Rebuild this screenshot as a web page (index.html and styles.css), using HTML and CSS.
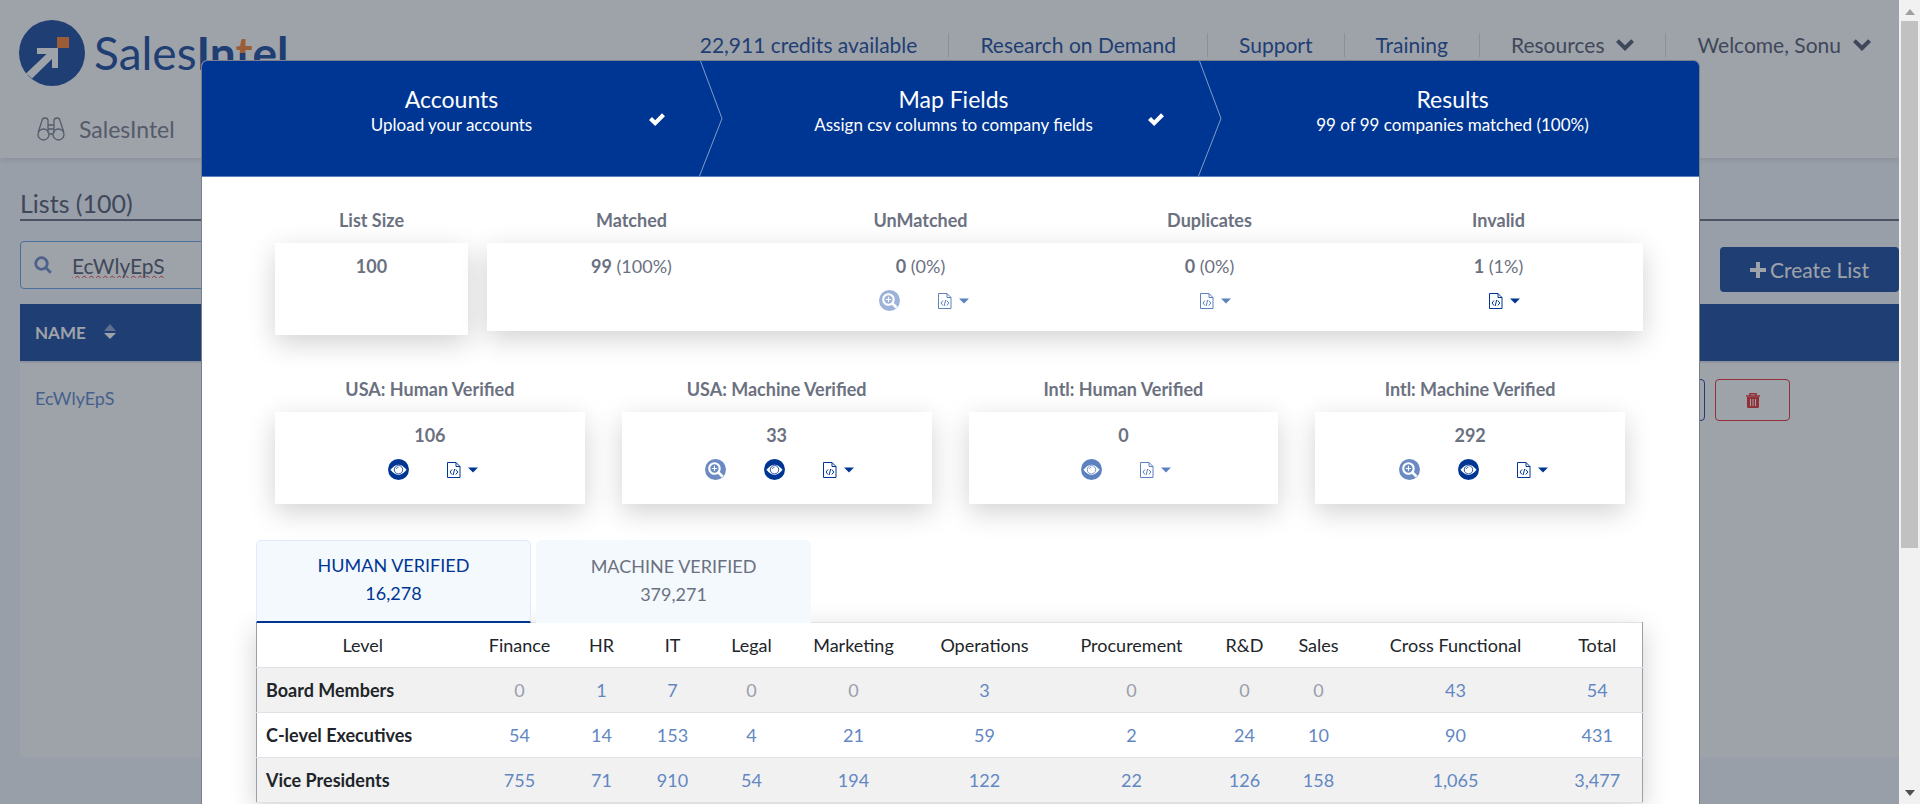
FILE: index.html
```html
<!DOCTYPE html>
<html lang="en">
<head>
<meta charset="utf-8">
<title>SalesIntel - Lists</title>
<link rel="stylesheet" href="styles.css">
</head>
<body>
<svg class="sprite" aria-hidden="true">
  <symbol id="i-zoom" viewBox="0 0 20 20"><circle cx="10" cy="10" r="10" fill="currentColor"/><circle cx="9" cy="9" r="5" fill="none" stroke="#fff" stroke-width="2"/><path d="M9 6.500v5M6.500 9h5" stroke="#fff" stroke-width="1"/><path d="M12.800 12.800l4 4" stroke="#fff" stroke-width="2.600"/></symbol>
  <symbol id="i-eye" viewBox="0 0 20 20"><circle cx="10" cy="10" r="10" fill="currentColor"/><path d="M2.300 10.300Q10 .5 17.700 10.300Q10 20 2.300 10.300z" fill="#fff"/><circle cx="10" cy="10.200" r="4" fill="#fff" stroke="currentColor" stroke-width=".8"/><path d="M7.800 9.600a2.400 2.400 0 0 1 2.200-1.800" fill="none" stroke="currentColor" stroke-width=".6"/></symbol>
  <symbol id="i-code" viewBox="0 0 14 16"><path d="M.5.5h8.500l4 4v11H.5zM9 .5v4h4" fill="none" stroke="currentColor"/><path d="M5 7.500L3 10l2 2.500M8.800 7.500l2 2.500-2 2.500M7.600 7l-1.400 6" fill="none" stroke="currentColor"/></symbol>
  <symbol id="i-caret" viewBox="0 0 10 6"><path d="M0 .5h10l-5 5z" fill="currentColor"/></symbol>
  <symbol id="i-check" viewBox="0 0 16 13"><path d="M0 7l3-3 3.200 3.200L13 .3l3 2.900L6.200 13z" fill="currentColor"/></symbol>
  <symbol id="i-down" viewBox="0 0 18 12"><path d="M0 3l2.800-2.800L9 6.300 15.200.2 18 3l-9 9z" fill="currentColor"/></symbol>
</svg>
<div class="screen">
  <div class="page">
    <header class="top">
      <div class="top-row">
        <a class="logo" href="#">
          <svg class="logo-mark" viewBox="0 0 66 66"><circle cx="33" cy="33" r="33" fill="#003693"/><path d="M18 28h21v20h-6V39L13 58.500 7 53.500 27.500 34H18z" fill="#fff"/><rect x="38" y="17" width="12" height="11" fill="#f8741c"/></svg>
          <span class="wordmark">Sales<b>In<span class="tee">t</span>el</b></span>
        </a>
        <nav class="nav">
          <a href="#">22,911 credits available</a>
          <a href="#">Research on Demand</a>
          <a href="#">Support</a>
          <a href="#">Training</a>
          <button class="dark" type="button">Resources <svg width="18" height="12"><use href="#i-down"/></svg></button>
          <button class="dark" type="button">Welcome, Sonu <svg width="18" height="12"><use href="#i-down"/></svg></button>
        </nav>
      </div>
      <a class="product" href="#">
        <svg width="28" height="24" viewBox="0 0 28 24" fill="none" stroke="currentColor" stroke-width="1.300"><circle cx="6.500" cy="17.500" r="5.500"/><circle cx="21.500" cy="17.500" r="5.500"/><path d="M1.300 15L5 3.500Q5.500 1 8 1t3 2v13M26.700 15L23 3.500Q22.500 1 20 1t-3 2v13M11 8h6M11 12h6M12 17h4"/></svg>
        SalesIntel
      </a>
    </header>
    <main class="lists">
      <h1>Lists (100)</h1>
      <div class="toolbar">
        <label class="search">
          <svg width="18" height="18" viewBox="0 0 18 18" fill="none" stroke="currentColor" stroke-width="2.800"><circle cx="7.500" cy="7.500" r="5.800"/><path d="M11.800 11.800l5 5"/></svg>
          <input type="text" value="EcWlyEpS" aria-label="Search lists">
        </label>
        <button class="create" type="button"><svg width="16" height="16" viewBox="0 0 16 16"><path d="M6 0h4v6h6v4h-6v6H6v-6H0V6h6z" fill="currentColor"/></svg> Create List</button>
      </div>
      <table class="list-table">
        <thead><tr><th>NAME <svg width="12" height="15" viewBox="0 0 12 15"><path d="M0 7l6-7 6 7z" fill="#7f9bc9"/><path d="M0 9h12l-6 6z" fill="#fff"/></svg></th><th></th></tr></thead>
        <tbody><tr><td><a href="#">EcWlyEpS</a></td><td><div class="row-actions"><button class="edit" type="button" aria-label="View"></button><button class="trash" type="button" aria-label="Delete"><svg width="14" height="15" viewBox="0 0 14 15"><path d="M4 2.500V.7h6v1.800M0 3h14" fill="none" stroke="currentColor" stroke-width="1.500"/><path d="M1 4h12v9.500q0 1.500-1.500 1.500h-9Q1 15 1 13.500z" fill="currentColor"/><path d="M4.500 6v7M7 6v7M9.500 6v7" stroke="#fff"/></svg></button></div></td></tr></tbody>
      </table>
    </main>
    <div class="backdrop">
      <section class="modal" role="dialog" aria-label="List results">
        <ol class="steps">
          <li><strong>Accounts</strong><span>Upload your accounts</span><svg class="check"><use href="#i-check"/></svg><svg class="arrow" viewBox="0 0 24 115" preserveAspectRatio="none"><path d="M1.500 0L23 57.500 0.500 115" fill="none" stroke="#809bc9" stroke-width="1"/></svg></li>
          <li><strong>Map Fields</strong><span>Assign csv columns to company fields</span><svg class="check"><use href="#i-check"/></svg><svg class="arrow" viewBox="0 0 24 115" preserveAspectRatio="none"><path d="M1.500 0L23 57.500 0.500 115" fill="none" stroke="#809bc9" stroke-width="1"/></svg></li>
          <li><strong>Results</strong><span>99 of 99 companies matched (100%)</span></li>
        </ol>
        <div class="content">
          <div class="summary">
            <div class="stat size"><h2>List Size</h2><div class="card"><p><b>100</b></p></div></div>
            <div class="matches">
              <div class="heads"><h2>Matched</h2><h2>UnMatched</h2><h2>Duplicates</h2><h2>Invalid</h2></div>
              <div class="card wide">
                <div><p><b>99</b> (100%)</p></div>
                <div><p><b>0</b> (0%)</p><div class="acts off"><button class="faint" type="button" aria-label="Research"><svg class="round"><use href="#i-zoom"/></svg></button><button type="button" aria-label="Export"><svg class="doc"><use href="#i-code"/></svg><svg class="caret"><use href="#i-caret"/></svg></button></div></div>
                <div><p><b>0</b> (0%)</p><div class="acts off"><button type="button" aria-label="Export"><svg class="doc"><use href="#i-code"/></svg><svg class="caret"><use href="#i-caret"/></svg></button></div></div>
                <div><p><b>1</b> (1%)</p><div class="acts"><button type="button" aria-label="Export"><svg class="doc"><use href="#i-code"/></svg><svg class="caret"><use href="#i-caret"/></svg></button></div></div>
              </div>
            </div>
          </div>
          <div class="verified">
            <div class="stat"><h2>USA: Human Verified</h2><div class="card"><p><b>106</b></p><div class="acts"><button type="button" aria-label="View"><svg class="round"><use href="#i-eye"/></svg></button><button type="button" aria-label="Export"><svg class="doc"><use href="#i-code"/></svg><svg class="caret"><use href="#i-caret"/></svg></button></div></div></div>
            <div class="stat"><h2>USA: Machine Verified</h2><div class="card"><p><b>33</b></p><div class="acts"><button class="soft" type="button" aria-label="Research"><svg class="round"><use href="#i-zoom"/></svg></button><button type="button" aria-label="View"><svg class="round"><use href="#i-eye"/></svg></button><button type="button" aria-label="Export"><svg class="doc"><use href="#i-code"/></svg><svg class="caret"><use href="#i-caret"/></svg></button></div></div></div>
            <div class="stat"><h2>Intl: Human Verified</h2><div class="card"><p><b>0</b></p><div class="acts off"><button type="button" aria-label="View"><svg class="round"><use href="#i-eye"/></svg></button><button type="button" aria-label="Export"><svg class="doc"><use href="#i-code"/></svg><svg class="caret"><use href="#i-caret"/></svg></button></div></div></div>
            <div class="stat"><h2>Intl: Machine Verified</h2><div class="card"><p><b>292</b></p><div class="acts"><button class="soft" type="button" aria-label="Research"><svg class="round"><use href="#i-zoom"/></svg></button><button type="button" aria-label="View"><svg class="round"><use href="#i-eye"/></svg></button><button type="button" aria-label="Export"><svg class="doc"><use href="#i-code"/></svg><svg class="caret"><use href="#i-caret"/></svg></button></div></div></div>
          </div>
          <div class="breakdown">
            <div class="tabs" role="tablist">
              <button class="on" type="button" role="tab" aria-selected="true"><span>HUMAN VERIFIED</span><span>16,278</span></button>
              <button type="button" role="tab" aria-selected="false"><span>MACHINE VERIFIED</span><span>379,271</span></button>
            </div>
            <table class="levels">
              <colgroup><col class="w212"><col class="w102"><col class="w62"><col class="w80"><col class="w78"><col class="w126"><col class="w136"><col class="w158"><col class="w68"><col class="w80"><col class="w194"><col class="w90"></colgroup>
              <thead><tr><th>Level</th><th>Finance</th><th>HR</th><th>IT</th><th>Legal</th><th>Marketing</th><th>Operations</th><th>Procurement</th><th>R&amp;D</th><th>Sales</th><th>Cross Functional</th><th>Total</th></tr></thead>
              <tbody>
                <tr><th scope="row">Board Members</th><td class="nil">0</td><td><a href="#">1</a></td><td><a href="#">7</a></td><td class="nil">0</td><td class="nil">0</td><td><a href="#">3</a></td><td class="nil">0</td><td class="nil">0</td><td class="nil">0</td><td><a href="#">43</a></td><td><a href="#">54</a></td></tr>
                <tr><th scope="row">C-level Executives</th><td><a href="#">54</a></td><td><a href="#">14</a></td><td><a href="#">153</a></td><td><a href="#">4</a></td><td><a href="#">21</a></td><td><a href="#">59</a></td><td><a href="#">2</a></td><td><a href="#">24</a></td><td><a href="#">10</a></td><td><a href="#">90</a></td><td><a href="#">431</a></td></tr>
                <tr><th scope="row">Vice Presidents</th><td><a href="#">755</a></td><td><a href="#">71</a></td><td><a href="#">910</a></td><td><a href="#">54</a></td><td><a href="#">194</a></td><td><a href="#">122</a></td><td><a href="#">22</a></td><td><a href="#">126</a></td><td><a href="#">158</a></td><td><a href="#">1,065</a></td><td><a href="#">3,477</a></td></tr>
              </tbody>
            </table>
          </div>
        </div>
      </section>
    </div>
  </div>
  <div class="scrollbar" aria-hidden="true">
    <svg width="10" height="6"><path d="M0 6l5-6 5 6z" fill="#a0a0a0"/></svg>
    <div class="thumb"></div>
    <svg width="10" height="6"><path d="M0 0h10L5 6z" fill="#505050"/></svg>
  </div>
</div>
</body>
</html>
```
FILE: styles.css
```css
* { box-sizing: border-box; }
body { margin: 0; font-family: Lato, "Open Sans", sans-serif; font-size: 18px; color: #212529; }
a { color: inherit; text-decoration: none; }
button { font: inherit; color: inherit; background: none; border: 0; padding: 0; }
h1, h2, p, ol { margin: 0; padding: 0; font-weight: 400; }
svg { display: block; flex: none; }
.sprite { position: absolute; width: 0; height: 0; }

.screen { display: grid; grid-template-columns: minmax(0, 1fr) 21px; height: 100vh; overflow: hidden; }
.page { position: relative; background: #f2f8fd; overflow: hidden; }

.top { height: 158px; background: #fff; box-shadow: 0 2px 6px rgba(0, 0, 0, .12); display: flex; flex-direction: column; justify-content: space-between; }
.top-row { display: flex; justify-content: space-between; align-items: flex-start; padding: 20px 28px 0 19px; }
.logo { display: flex; align-items: center; gap: 9px; height: 66px; }
.logo-mark { width: 66px; height: 66px; }
.wordmark { font-size: 46px; line-height: 66px; color: #003693; }
.tee { background: linear-gradient(#f8741c 50%, #003693 50%); background-clip: text; color: transparent; }
.nav { display: flex; align-items: flex-start; font-size: 21px; line-height: 24px; color: #003693; padding-top: 13px; }
.nav > * { display: flex; align-items: center; gap: 12px; height: 24px; padding: 0 31px; border-right: 1px solid #d3dbe9; }
.nav > :last-child { border-right: 0; padding-right: 0; }
.dark { color: #414a60; }
.product { display: flex; align-items: center; gap: 14px; padding: 0 0 15px 37px; font-size: 23px; line-height: 28px; color: #6b7180; }

.lists { padding: 30px 0 0 20px; }
.lists h1 { font-size: 25px; line-height: 31px; border-bottom: 2px solid #5a6272; color: #414a60; }
.toolbar { display: flex; justify-content: space-between; align-items: flex-end; padding: 20px 0 12px; }
.search { display: flex; align-items: center; gap: 20px; width: 420px; height: 48px; margin-bottom: 3px; padding: 0 13px; border: 1px solid #5a9ae8; border-radius: 4px; background: #fff; color: #5a7fc0; }
.search input { flex: 1; min-width: 0; border: 0; outline: 0; padding: 0; background: none; font: inherit; font-size: 21px; color: #414a60; text-decoration: underline wavy #ee1c24 1px; }
.create { display: flex; align-items: center; justify-content: center; gap: 4px; width: 179px; height: 45px; border-radius: 4px; background: #003693; color: #fff; font-size: 21px; }
.list-table { width: 100%; height: 453px; border-collapse: collapse; background: #fff; }
.list-table th { height: 58px; background: #003693; color: #fff; text-align: left; font-size: 17px; padding: 0 15px; border-bottom: 2px solid #dee2e6; }
.list-table th svg { display: inline-block; margin-left: 14px; }
.list-table td { vertical-align: top; padding: 16px 15px; line-height: 38px; color: #4d7ac4; }
.row-actions { display: flex; justify-content: flex-end; gap: 10px; padding-right: 94px; }
.row-actions button { width: 75px; height: 42px; border: 1px solid #003693; border-radius: 4px; display: grid; place-items: center; }
.row-actions .trash { border-color: #e51a1a; color: #e51a1a; }

.backdrop { position: absolute; inset: 0; padding: 60px 0 0 2px; background: rgba(62, 70, 83, .5); overflow: hidden; }
.modal { max-width: 1499px; margin: 0 auto; background: #fff; border: 1px solid #797f89; border-radius: 6px; overflow: hidden; }
.steps { display: grid; grid-template-columns: repeat(3, 1fr); list-style: none; background: #003693; color: #fff; border-bottom: 1px solid #5c81bb; }
.steps li { position: relative; height: 115px; padding-top: 24px; text-align: center; }
.steps li + li { padding-left: 6px; }
.steps strong { display: block; font-weight: 400; font-size: 23px; line-height: 28px; }
.steps span { display: block; font-size: 17px; line-height: 24px; }
.check { position: absolute; right: 36px; top: 52px; width: 16px; height: 13px; }
.arrow { position: absolute; right: -22px; top: 0; width: 24px; height: 100%; }

.content { padding: 31px 56px 60px 54px; }
.content h2 { font-size: 18px; line-height: 24px; font-weight: 700; text-align: center; color: #6b7180; margin-bottom: 11px; }
.summary { display: grid; grid-template-columns: 193px 1fr; gap: 19px; padding-left: 19px; align-items: start; }
.card { min-height: 92px; padding-top: 10px; background: #fff; box-shadow: 0 8px 26px rgba(0, 0, 0, .18); text-align: center; color: #6b7180; }
.card p { line-height: 26px; }
.heads, .wide { display: grid; grid-template-columns: repeat(4, 1fr); }
.wide { min-height: 88px; }
.acts { display: flex; justify-content: center; gap: 38px; margin-top: 11px; padding-left: 6px; height: 21px; color: #003693; }
.acts button { display: flex; align-items: center; gap: 7px; }
.acts button:only-child { margin-left: 6px; }
.off { color: #5c81bf; }
.acts .soft { color: #6b8ac2; }
.acts .faint { color: #9db2d8; }
.round { width: 21px; height: 21px; }
.doc { width: 14px; height: 16px; }
.caret { width: 10px; height: 6px; }
.verified { display: grid; grid-template-columns: repeat(4, 1fr); gap: 37px; padding: 42px 18px 36px 19px; }

.tabs { display: flex; gap: 5px; }
.tabs button { width: 275px; height: 83px; padding-bottom: 4px; border: 1px solid #f4f9fe; border-bottom: 0; border-radius: 5px 5px 0 0; background: #f4f9fe; color: #6b7180; font-size: 18px; line-height: 28px; }
.tabs span { display: block; }
.tabs .on { color: #003693; border-color: #e2e9fc; border-bottom: 2px solid #003693; }
.levels { width: 100%; table-layout: fixed; border-collapse: collapse; margin-top: -1px; box-shadow: 0 8px 26px rgba(0, 0, 0, .18); background: #fff; border: 1px solid #9a9fa9; border-top-color: #dee2e6; }
.levels th, .levels td { height: 45px; padding: 0; text-align: center; font-weight: 400; border-bottom: 1px solid #dee2e6; }
.levels tbody th { text-align: left; font-weight: 700; padding-left: 9px; }
.levels tbody tr:nth-child(odd) { background: #f1f1f1; }
.levels td { color: #6387c3; }
.levels .nil { color: #9a9fab; }
.w212 { width: 212px; } .w102 { width: 102px; } .w62 { width: 62px; } .w80 { width: 80px; } .w78 { width: 78px; } .w126 { width: 126px; }
.w136 { width: 136px; } .w158 { width: 158px; } .w68 { width: 68px; } .w194 { width: 194px; } .w90 { width: 90px; }

.tabs { position: relative; z-index: 1; }

.scrollbar { display: flex; flex-direction: column; align-items: center; padding: 9px 0 8px; background: #f1f1f1; }
.thumb { width: 17px; height: 67%; margin: 6px 0 auto; background: #c1c1c1; }
```
